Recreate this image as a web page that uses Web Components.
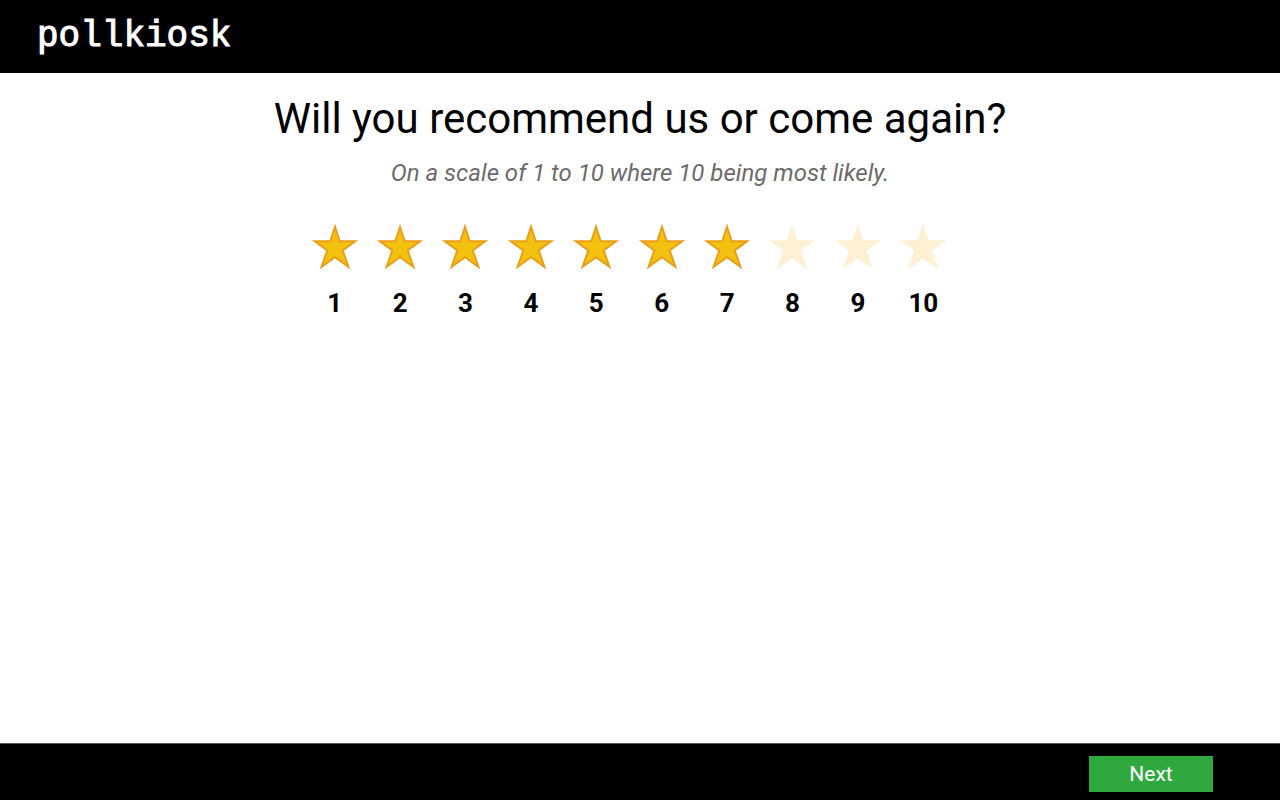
<!DOCTYPE html>
<html lang="en">
<head>
<meta charset="utf-8">
<meta name="viewport" content="width=device-width, initial-scale=1">
<title>pollkiosk</title>
<style>
  body {
    margin: 0;
    background: #fff;
    color: #000;
    font-family: Roboto, "Liberation Sans", sans-serif;
  }
</style>
</head>
<body>
<poll-kiosk>
  <kiosk-header slot="header">pollkiosk</kiosk-header>
  <poll-question>
    <span slot="title">Will you recommend us or come again?</span>
    <span slot="hint">On a scale of 1 to 10 where 10 being most likely.</span>
    <star-rating max="10" value="7" label="Rating"></star-rating>
  </poll-question>
  <kiosk-footer slot="footer">Next</kiosk-footer>
</poll-kiosk>

<script>
class PollKiosk extends HTMLElement {
  constructor() {
    super();
    this.attachShadow({ mode: 'open' });
    this.shadowRoot.innerHTML = `
      <style>
        :host {
          display: flex;
          flex-direction: column;
          min-height: 100vh;
        }
        main {
          flex: 1;
        }
      </style>
      <slot name="header"></slot>
      <main><slot></slot></main>
      <slot name="footer"></slot>
    `;
  }
}

class KioskHeader extends HTMLElement {
  constructor() {
    super();
    this.attachShadow({ mode: 'open' });
    this.shadowRoot.innerHTML = `
      <style>
        :host {
          display: block;
          background: #010003;
          color: #fff;
        }
        header {
          padding: 17px 37px 16px;
          font-family: "Liberation Mono", monospace;
          font-size: 36px;
          line-height: 40px;
          -webkit-text-stroke: 1px #fff;
        }
      </style>
      <header><slot></slot></header>
    `;
  }
}

class PollQuestion extends HTMLElement {
  constructor() {
    super();
    this.attachShadow({ mode: 'open' });
    this.shadowRoot.innerHTML = `
      <style>
        :host {
          display: block;
          padding: 20px 24px;
          text-align: center;
        }
        h1 {
          margin: 0;
          font-size: 42px;
          font-weight: 400;
          line-height: 52px;
        }
        p {
          margin: 14px 0 36px;
          color: #6b6b6b;
          font-size: 24px;
          font-style: italic;
          line-height: 28px;
        }
      </style>
      <h1><slot name="title"></slot></h1>
      <p><slot name="hint"></slot></p>
      <slot></slot>
    `;
  }
}

class StarRating extends HTMLElement {
  constructor() {
    super();
    this.attachShadow({ mode: 'open' });
    this.shadowRoot.innerHTML = `
      <style>
        :host {
          display: block;
        }
        fieldset {
          display: grid;
          grid-auto-flow: column;
          grid-auto-columns: 1fr;
          box-sizing: border-box;
          max-width: 676px;
          margin: 0 auto;
          padding: 0 22px 0 0;
          border: 0;
        }
        label {
          display: flex;
          flex-direction: column;
          align-items: center;
          gap: 16px;
          position: relative;
          cursor: pointer;
          font-size: 26px;
          font-weight: 700;
          line-height: 32px;
        }
        input {
          position: absolute;
          inset: 0;
          width: 100%;
          height: 100%;
          margin: 0;
          opacity: 0;
          cursor: pointer;
        }
        svg {
          display: block;
          width: 48px;
          height: 48px;
          fill: #fdf1d3;
          stroke: #fdf0d4;
        }
        label.on svg {
          fill: #f3c10f;
          stroke: #e99f1a;
        }
        input:focus-visible + svg {
          outline: 2px solid #30a840;
        }
      </style>
      <fieldset></fieldset>
    `;
  }

  connectedCallback() {
    const fieldset = this.shadowRoot.querySelector('fieldset');
    const max = Number(this.getAttribute('max'));
    const value = Number(this.getAttribute('value'));

    fieldset.setAttribute('aria-label', this.getAttribute('label'));
    for (let i = 1; i <= max; i++) {
      const label = document.createElement('label');
      label.innerHTML = `
        <input type="radio" name="rating" value="${i}">
        <svg viewBox="0 0 48 48" stroke-width="2" stroke-miterlimit="8" aria-hidden="true">
          <path d="M24 3.800 L28.700 18.300 H44.200 L31.700 27.400 L37.400 43.800 L24 34.300 L10.600 43.800 L16.300 27.400 L3.800 18.300 H19.300 Z"/>
        </svg>
        <span>${i}</span>
      `;
      fieldset.appendChild(label);
    }
    fieldset.addEventListener('change', e => this.select(Number(e.target.value)));
    this.select(value);
  }

  select(value) {
    this.shadowRoot.querySelectorAll('label').forEach((label, i) => {
      label.classList.toggle('on', i < value);
      label.querySelector('input').checked = i + 1 === value;
    });
  }
}

class KioskFooter extends HTMLElement {
  constructor() {
    super();
    this.attachShadow({ mode: 'open' });
    this.shadowRoot.innerHTML = `
      <style>
        :host {
          display: block;
          background: #010003;
        }
        footer {
          display: flex;
          justify-content: flex-end;
          padding: 12px 67px 8px;
          border-top: 1px solid #555;
        }
        button {
          min-width: 124px;
          padding: 4px 16px;
          border: 0;
          background: #30a840;
          color: #fff;
          font-family: inherit;
          font-size: 21px;
          line-height: 28px;
          cursor: pointer;
        }
      </style>
      <footer><button type="button"><slot></slot></button></footer>
    `;
  }
}

customElements.define('poll-kiosk', PollKiosk);
customElements.define('kiosk-header', KioskHeader);
customElements.define('poll-question', PollQuestion);
customElements.define('star-rating', StarRating);
customElements.define('kiosk-footer', KioskFooter);
</script>
</body>
</html>
